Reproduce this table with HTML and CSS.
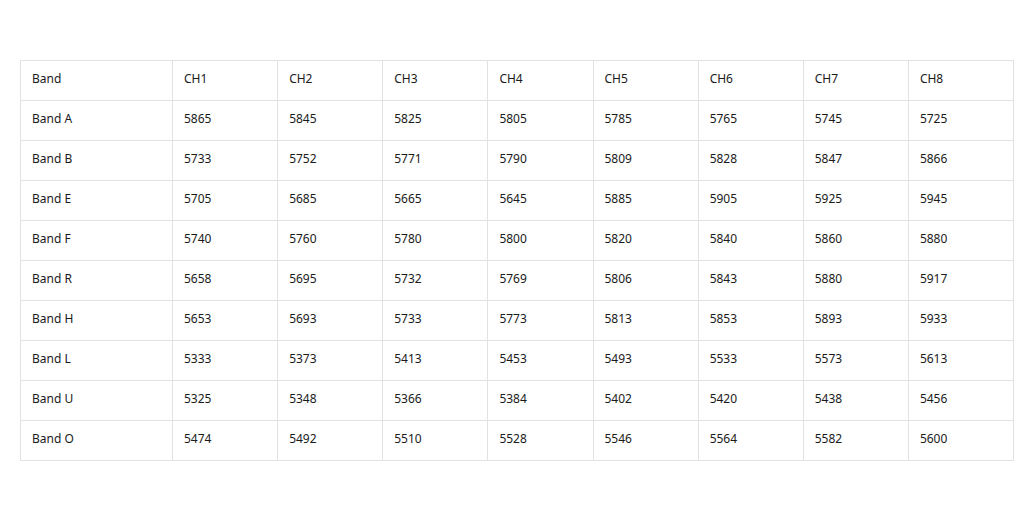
FILE: index.html
```html
<!DOCTYPE html>
<html>
<head>
<meta charset="utf-8">
<link rel="stylesheet" href="styles.css">
</head>
<body>
<div class="wrap">
<table class="bands">
<colgroup><col class="c-band"><col span="8"></colgroup>
<thead>
<tr><td>Band</td><td>CH1</td><td>CH2</td><td>CH3</td><td>CH4</td><td>CH5</td><td>CH6</td><td>CH7</td><td>CH8</td></tr>
</thead>
<tbody>
<tr><td>Band A</td><td>5865</td><td>5845</td><td>5825</td><td>5805</td><td>5785</td><td>5765</td><td>5745</td><td>5725</td></tr>
<tr><td>Band B</td><td>5733</td><td>5752</td><td>5771</td><td>5790</td><td>5809</td><td>5828</td><td>5847</td><td>5866</td></tr>
<tr><td>Band E</td><td>5705</td><td>5685</td><td>5665</td><td>5645</td><td>5885</td><td>5905</td><td>5925</td><td>5945</td></tr>
<tr><td>Band F</td><td>5740</td><td>5760</td><td>5780</td><td>5800</td><td>5820</td><td>5840</td><td>5860</td><td>5880</td></tr>
<tr><td>Band R</td><td>5658</td><td>5695</td><td>5732</td><td>5769</td><td>5806</td><td>5843</td><td>5880</td><td>5917</td></tr>
<tr><td>Band H</td><td>5653</td><td>5693</td><td>5733</td><td>5773</td><td>5813</td><td>5853</td><td>5893</td><td>5933</td></tr>
<tr><td>Band L</td><td>5333</td><td>5373</td><td>5413</td><td>5453</td><td>5493</td><td>5533</td><td>5573</td><td>5613</td></tr>
<tr><td>Band U</td><td>5325</td><td>5348</td><td>5366</td><td>5384</td><td>5402</td><td>5420</td><td>5438</td><td>5456</td></tr>
<tr><td>Band O</td><td>5474</td><td>5492</td><td>5510</td><td>5528</td><td>5546</td><td>5564</td><td>5582</td><td>5600</td></tr>
</tbody>
</table>
</div>
</body>
</html>
```
FILE: styles.css
```css
html, body { margin: 0; padding: 0; background: #fff; }
.wrap { padding: 60px 18px 0 20px; }
.bands {
  width: 100%;
  border-collapse: collapse;
  table-layout: fixed;
  font-family: "Noto Sans", sans-serif;
  font-size: 12px;
  color: #1a1a1a;
}
.c-band { width: 152px; }
.bands td {
  border: 1px solid #e2e2e2;
  height: 40px;
  padding: 0 0 4px 11px;
  box-sizing: border-box;
  vertical-align: middle;
  white-space: nowrap;
}
```
